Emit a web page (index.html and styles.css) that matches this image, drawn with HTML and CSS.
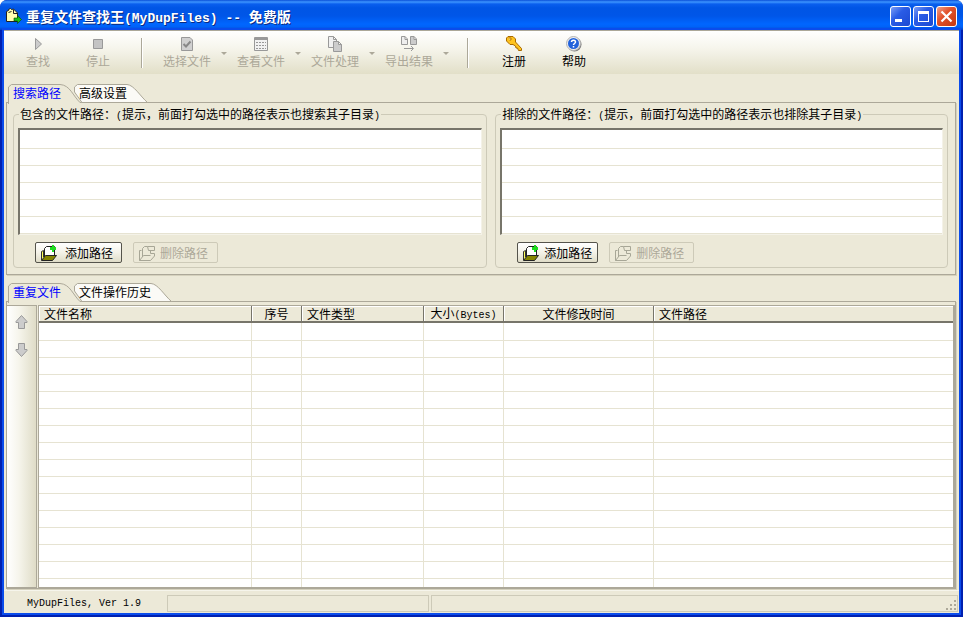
FILE: index.html
```html
<!DOCTYPE html>
<html lang="zh-CN">
<head>
<meta charset="utf-8">
<title>重复文件查找王(MyDupFiles) -- 免费版</title>
<link rel="stylesheet" href="styles.css">
</head>
<body>
<svg class="symbols" aria-hidden="true">
  <symbol id="folder-add" viewBox="0 0 18 16">
    <path d="M4.500 12.500V3.500L6.500 1.500H14.500V10.500" fill="#fff" stroke="#222"/>
    <path d="M1.500 15V6.500L3.500 5.500V12" fill="#ffff5a" stroke="#333"/>
    <path d="M1.500 15.500L5.500 10.500H16.500L12.500 15.500Z" fill="#858500" stroke="#222"/>
    <path d="M12 0H14V2H16V5H14V7H12V5H10V2H12Z" fill="#1fdc1f"/>
  </symbol>
  <symbol id="folder-remove" viewBox="0 0 18 16">
    <path d="M4.500 12V3.500L6.500 1.500H9.500M9.500 1.500H16.500V5.500H10.500ZM12.500 5.500V8.500H16.500V11L12.500 15.500H1.500V5.500H3.500M1.500 15.500L5.500 10.500H12.500" fill="none" stroke="#a7a696"/>
  </symbol>
</svg>
<div class="window">
  <header class="titlebar">
    <svg class="app-icon" viewBox="0 0 16 16" aria-hidden="true">
      <path d="M.5 3.500L2.500 2.500V1.500L4.500 .5L5.500 1.500L7.500 1L11.500 5V13.500H.5Z" fill="#ffffb0" stroke="#222"/>
      <path d="M2.500 4.500L5.500 3.500M7.500 1.500V5.500H11" fill="none" stroke="#222"/>
      <path d="M8 10H11.500V7.500L15.500 11.500L11.500 15.500V13H8Z" fill="#16c216" stroke="#064006" stroke-width=".6"/>
    </svg>
    <h1>重复文件查找王<span class="latin">(MyDupFiles) -- </span>免费版</h1>
    <div class="caption-buttons">
      <button class="caption" aria-label="最小化"><svg viewBox="0 0 19 19"><path d="M4 12H11V15H4Z" fill="#fff"/></svg></button>
      <button class="caption" aria-label="最大化"><svg viewBox="0 0 19 19"><path d="M4 4H15V15H4ZM5 7V14H14V7Z" fill="#fff" fill-rule="evenodd"/></svg></button>
      <button class="caption close" aria-label="关闭"><svg viewBox="0 0 19 19"><path d="M4.500 4.500L14.500 14.500M14.500 4.500L4.500 14.500" stroke="#fff" stroke-width="2.200"/></svg></button>
    </div>
  </header>
  <div class="client">
    <div class="toolbar" role="toolbar">
      <button class="tool" disabled><svg viewBox="0 0 16 16"><path d="M5.500 2.500V13.500L11.500 8Z" fill="#ccc" stroke="#9a9a9a"/></svg>查找</button>
      <button class="tool" disabled><svg viewBox="0 0 16 16"><path d="M3.500 3.500H12.500V12.500H3.500Z" fill="#c4c4c4" stroke="#999"/></svg>停止</button>
      <span class="separator"></span>
      <button class="tool wide" disabled><svg viewBox="0 0 16 16"><path d="M2.500 1.500H11L13.500 4V14.500H2.500Z" fill="#d0d0d0" stroke="#999"/><path d="M4.500 8L7 10.500L11.500 5.500" fill="none" stroke="#888" stroke-width="2"/></svg>选择文件</button>
      <button class="drop" disabled aria-label="选择文件菜单"></button>
      <button class="tool wide" disabled><svg viewBox="0 0 16 16"><path d="M1.500 1.500H14.500V14.500H1.500Z" fill="#f2f2f2" stroke="#999"/><path d="M1 3H15" stroke="#999" stroke-width="2"/><path d="M3 6.500H13M3 9.500H13M3 12.500H13" stroke="#999" stroke-dasharray="2 1"/></svg>查看文件</button>
      <button class="drop" disabled aria-label="查看文件菜单"></button>
      <button class="tool wide" disabled><svg viewBox="0 0 16 16"><path d="M1.500 .5H6.500L9.500 3.500V11.500H1.500ZM6.500 .5V3.500H9.500" fill="#f0f0f0" stroke="#999"/><path d="M6.500 5.500H11.500L14.500 8.500V15.500H6.500ZM11.500 5.500V8.500H14.500" fill="#ccc" stroke="#999"/></svg>文件处理</button>
      <button class="drop" disabled aria-label="文件处理菜单"></button>
      <button class="tool wide" disabled><svg viewBox="0 0 16 16"><path d="M.5 .5H4L6.500 3V8.500H.5ZM4 .5V3.500H6.500" fill="#eee" stroke="#999"/><path d="M9.500 .5H13L15.500 3V8.500H9.500ZM13 .5V3.500H15.500" fill="#ccc" stroke="#999"/><path d="M3 12.500H12M10 10L12.500 12.500L10 15" fill="none" stroke="#999"/></svg>导出结果</button>
      <button class="drop" disabled aria-label="导出结果菜单"></button>
      <span class="separator spaced"></span>
      <button class="tool"><svg viewBox="0 0 16 16"><path d="M2 .5H7L9.500 3V6L15.500 12.500V14.500H12.500L11.500 12H10L9.500 10L7 8.500H4L.5 5V2Z" fill="#ffc41f" stroke="#a96a00"/><path d="M2.500 2H5V4H3.500" fill="#fff2a0" stroke="#b87500"/></svg>注册</button>
      <button class="tool"><svg viewBox="0 0 16 16"><circle cx="8.500" cy="8.500" r="7" fill="#777"/><circle cx="7.500" cy="7.500" r="7" fill="#eee" stroke="#b5b5b5"/><circle cx="7.500" cy="7.500" r="5.500" fill="#2262db"/><path d="M5.500 6C5.500 3.500 9.500 3.500 9.500 6C9.500 7.500 7.500 7.500 7.500 9M7.500 10V11.500" fill="none" stroke="#fff" stroke-width="1.500"/></svg>帮助</button>
    </div>

    <main class="content">
      <nav class="tabs">
        <button class="tab active"><svg class="tab-shape" viewBox="0 0 72 20"><path d="M.5 20V3L3.500 .5H52C62 1 65 12 72 18.500V20" fill="#ece9d8"/><path d="M.5 20V3L3.500 .5H52C62 1 65 12 72 18.500" fill="none" stroke="#aca899"/></svg><span>搜索路径</span></button>
        <button class="tab"><svg class="tab-shape" viewBox="0 0 74 19"><path d="M.5 8V3L3.500 .5H53C60 1 66 12 73.500 18.500H8Z" fill="#fbfaf6" stroke="#aca899"/></svg><span>高级设置</span></button>
      </nav>
      <section class="panel paths">
        <fieldset class="group include">
          <legend>包含的文件路径：<span class="latin">(</span>提示，前面打勾选中的路径表示也搜索其子目录<span class="latin">)</span></legend>
          <div class="path-list"></div>
          <div class="actions">
            <button class="action add"><svg><use href="#folder-add"/></svg>添加路径</button>
            <button class="action" disabled><svg><use href="#folder-remove"/></svg>删除路径</button>
          </div>
        </fieldset>
        <fieldset class="group exclude">
          <legend>排除的文件路径：<span class="latin">(</span>提示，前面打勾选中的路径表示也排除其子目录<span class="latin">)</span></legend>
          <div class="path-list"></div>
          <div class="actions">
            <button class="action"><svg><use href="#folder-add"/></svg>添加路径</button>
            <button class="action" disabled><svg><use href="#folder-remove"/></svg>删除路径</button>
          </div>
        </fieldset>
      </section>

      <nav class="tabs lower">
        <button class="tab active"><svg class="tab-shape" viewBox="0 0 72 20"><path d="M.5 20V3L3.500 .5H52C62 1 65 12 72 18.500V20" fill="#ece9d8"/><path d="M.5 20V3L3.500 .5H52C62 1 65 12 72 18.500" fill="none" stroke="#aca899"/></svg><span>重复文件</span></button>
        <button class="tab long"><svg class="tab-shape" viewBox="0 0 98 19"><path d="M.5 8V3L3.500 .5H77C84 1 90 12 97.500 18.500H8Z" fill="#fbfaf6" stroke="#aca899"/></svg><span>文件操作历史</span></button>
      </nav>
      <section class="panel results">
        <div class="side">
          <button disabled aria-label="上移"><svg viewBox="0 0 13 14"><path d="M6.500 .5L12 6.500V7.500H9.500V13.500H3.500V7.500H1V6.500Z" fill="#ccc" stroke="#999"/></svg></button>
          <button disabled aria-label="下移"><svg viewBox="0 0 13 14"><path d="M6.500 13.500L12 7.500V6.500H9.500V.5H3.500V6.500H1V7.500Z" fill="#ccc" stroke="#999"/></svg></button>
        </div>
        <div class="grid">
          <table>
            <colgroup><col class="c-name"><col class="c-no"><col class="c-type"><col class="c-size"><col class="c-time"><col></colgroup>
            <thead><tr><th>文件名称</th><th class="center">序号</th><th>文件类型</th><th class="center">大小<span class="latin">(Bytes)</span></th><th class="center">文件修改时间</th><th>文件路径</th></tr></thead>
            <tbody>
              <tr><td></td><td></td><td></td><td></td><td></td><td></td></tr>
              <tr><td></td><td></td><td></td><td></td><td></td><td></td></tr>
              <tr><td></td><td></td><td></td><td></td><td></td><td></td></tr>
              <tr><td></td><td></td><td></td><td></td><td></td><td></td></tr>
              <tr><td></td><td></td><td></td><td></td><td></td><td></td></tr>
              <tr><td></td><td></td><td></td><td></td><td></td><td></td></tr>
              <tr><td></td><td></td><td></td><td></td><td></td><td></td></tr>
              <tr><td></td><td></td><td></td><td></td><td></td><td></td></tr>
              <tr><td></td><td></td><td></td><td></td><td></td><td></td></tr>
              <tr><td></td><td></td><td></td><td></td><td></td><td></td></tr>
              <tr><td></td><td></td><td></td><td></td><td></td><td></td></tr>
              <tr><td></td><td></td><td></td><td></td><td></td><td></td></tr>
              <tr><td></td><td></td><td></td><td></td><td></td><td></td></tr>
              <tr><td></td><td></td><td></td><td></td><td></td><td></td></tr>
              <tr><td></td><td></td><td></td><td></td><td></td><td></td></tr>
              <tr><td></td><td></td><td></td><td></td><td></td><td></td></tr>
            </tbody>
          </table>
        </div>
      </section>
    </main>

    <footer class="statusbar">
      <span class="version latin">MyDupFiles, Ver 1.9</span>
      <span class="cell progress"></span>
      <span class="cell message"><svg class="grip" viewBox="0 0 11 11"><path d="M8 0H10V2H8ZM4 4H6V6H4ZM8 4H10V6H8ZM0 8H2V10H0ZM4 8H6V10H4ZM8 8H10V10H8Z" fill="#aca899"/></svg></span>
    </footer>
  </div>
</div>
</body>
</html>
```
FILE: styles.css
```css
* { box-sizing: border-box; }
body {
  margin: 0;
  background: #fff;
  color: #000;
  font: 12px/14px "Noto Sans CJK SC", sans-serif;
}
button {
  margin: 0;
  padding: 0;
  border: 0;
  background: none;
  color: inherit;
  font: inherit;
  white-space: nowrap;
}
svg { display: block; flex: none; }
.symbols { position: absolute; width: 0; height: 0; }
.latin { font-family: "Liberation Mono", monospace; font-size: 10px; line-height: 1; }

.window {
  display: flex;
  flex-direction: column;
  height: 100vh;
  overflow: hidden;
  border-radius: 7px 7px 0 0;
  background: #0020b0;
}
.titlebar {
  display: flex;
  flex: none;
  align-items: center;
  height: 30px;
  padding: 2px 6px 0;
  background: linear-gradient(#0a4fd8 0, #3d95ff 2px, #0a5fee 4px, #0055e5 8px, #0056e8 16px, #0066ff 24px, #0062f8 27px, #003fc4 30px);
}
.app-icon { width: 16px; height: 16px; }
.titlebar h1 {
  flex: 1;
  margin: 0 0 0 4px;
  color: #fff;
  font-size: 14px;
  line-height: 20px;
  font-weight: bold;
  white-space: pre;
  text-shadow: 1px 1px 0 #0a2a80;
}
.titlebar .latin { font-size: 13px; }
.caption-buttons { display: flex; gap: 2px; }
.caption {
  width: 21px;
  height: 21px;
  border: 1px solid #fff;
  border-radius: 3px;
  background: linear-gradient(135deg, #7b9df5, #2a5ce6 40%, #1c49d2);
}
.caption.close { background: linear-gradient(135deg, #f0a08a, #e2532d 40%, #c5380f); }

.client {
  display: flex;
  flex: 1;
  flex-direction: column;
  min-height: 0;
  margin: 0 4px 4px;
  background: #ece9d8;
  box-shadow: 0 0 0 2px #0a4cec;
}
.toolbar {
  display: flex;
  flex: none;
  align-items: flex-start;
  height: 44px;
  padding: 5px 4px 0;
  border-top: 1px solid #aca899;
  background: linear-gradient(#fff, #f6f5ec 40%, #e2dfc8);
}
.tool {
  display: flex;
  flex-direction: column;
  align-items: center;
  gap: 2px;
  width: 60px;
}
.tool svg { width: 16px; height: 16px; }
.tool.wide { width: 62px; }
.tool:disabled, .drop:disabled { color: #aca899; }
.drop { width: 12px; height: 34px; }
.drop::before {
  content: "";
  display: block;
  width: 0;
  margin: 0 auto;
  border: 3px solid transparent;
  border-top-color: #aca899;
  border-bottom: 0;
}
.separator {
  width: 2px;
  height: 30px;
  margin: 2px 13px;
  border-left: 1px solid #aca899;
  border-right: 1px solid #fff;
}
.separator.spaced { margin: 2px 15px; }

.content {
  display: flex;
  flex: 1;
  flex-direction: column;
  min-height: 0;
  padding: 10px 3px 0 2px;
}
.tabs { display: flex; flex: none; height: 18px; padding-left: 2px; }
.tab { position: relative; width: 66px; height: 18px; text-align: left; }
.tab.active { z-index: 1; color: #00f; }
.tab.long { width: 98px; }
.tab span { position: relative; padding-left: 5px; line-height: 18px; }
.tab-shape { position: absolute; top: 0; left: 0; width: 74px; height: 19px; }
.active .tab-shape { width: 72px; height: 20px; }
.long .tab-shape { width: 98px; }
.tabs.lower { margin-top: 8px; }
.panel { display: flex; border: 1px solid #aca899; box-shadow: 1px 1px 0 #d5d1bd; }
.paths { flex: none; gap: 8px; padding: 4px 7px 6px 6px; }
.group {
  min-width: 0;
  margin: 0;
  padding: 6px 4px 4px;
  border: 1px solid #cdcab8;
  border-radius: 4px;
}
.include { flex: 474 1 0; }
.exclude { flex: 452 1 0; }
.group legend { margin-left: 1px; padding: 0 1px; white-space: nowrap; }
.path-list {
  height: 107px;
  border: 1px solid #f4f2e8;
  border-top: 2px solid #77756a;
  border-left: 2px solid #77756a;
  background: linear-gradient(#fff, #fff) 0 0 / 100% 1px no-repeat, repeating-linear-gradient(#fff 0 16px, #e6e3d2 16px 17px) 0 2px;
}
.actions { display: flex; gap: 11px; padding: 7px 0 0 17px; }
.action {
  display: flex;
  align-items: center;
  gap: 4px;
  width: 81px;
  height: 21px;
  padding-left: 4px;
  border: 1px solid #55544c;
  border-radius: 2px;
  background: linear-gradient(#fff, #f4f2e8 50%, #dfdcc7);
}
.action.add { width: 87px; gap: 7px; }
.action svg { width: 18px; height: 16px; }
.action:disabled { width: 85px; border-color: #cdcab8; background: none; color: #aca899; }

.results { flex: 1; min-height: 0; margin-bottom: 1px; padding: 3px 0 0; }
.side {
  display: flex;
  flex: none;
  flex-direction: column;
  align-items: center;
  gap: 14px;
  width: 30px;
  margin-right: 1px;
  padding-top: 9px;
  border: 1px solid #aca899;
  border-left: 0;
  background: linear-gradient(90deg, #fff, #f6f5ec 40%, #dfdcc7);
}
.side svg { width: 13px; height: 14px; }
.grid {
  flex: 1;
  min-width: 0;
  overflow: hidden;
  border: 1px solid #aca899;
  border-right-width: 2px;
  background: #fff;
}
table { width: 100%; border-collapse: separate; border-spacing: 0; table-layout: fixed; }
.c-name { width: 213px; }
.c-no { width: 50px; }
.c-type { width: 122px; }
.c-size { width: 80px; }
.c-time { width: 150px; }
th {
  height: 16px;
  padding: 0 0 0 5px;
  border-right: 1px solid #77756a;
  border-bottom: 2px solid #77756a;
  background: #ece9d8;
  box-shadow: inset 1px 1px 0 #fff;
  font-weight: normal;
  line-height: 14px;
  text-align: left;
  white-space: nowrap;
}
th.center { padding: 0; text-align: center; }
th:last-child { border-right: 0; }
td { height: 17px; padding: 0; border: 0 solid #e6e3d2; border-width: 0 1px 1px 0; }
tr:first-child td { height: 18px; }
td:last-child { border-right: 0; }

.statusbar {
  display: flex;
  flex: none;
  gap: 2px;
  height: 23px;
  padding: 4px 1px 1px 23px;
  border-top: 1px solid #f6f5ec;
}
.version { width: 138px; line-height: 18px; white-space: pre; }
.cell { border: 1px solid #cdcab8; }
.progress { width: 262px; }
.message { display: flex; flex: 1; align-items: flex-end; justify-content: flex-end; }
.grip { width: 11px; height: 11px; }
```
